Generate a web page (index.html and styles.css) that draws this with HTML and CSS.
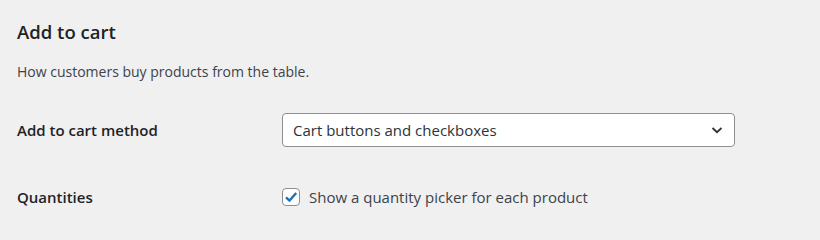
FILE: index.html
```html
<!DOCTYPE html>
<html lang="en">
<head>
	<meta charset="UTF-8">
	<meta name="viewport" content="width=device-width, initial-scale=1.0">
	<title>Add to cart</title>
	<link rel="stylesheet" href="styles.css">
</head>
<body>
<div class="settings">
	<h2 class="settings-title">Add to cart</h2>
	<p class="settings-desc">How customers buy products from the table.</p>
	<div class="form-table">
		<div class="form-row row-method">
			<label class="form-label" for="cart-method">Add to cart method</label>
			<div class="form-field">
				<div class="select">
					<span class="select-value">Cart buttons and checkboxes</span>
					<svg class="select-arrow" width="14" height="14" viewBox="0 0 14 14"><path d="M2.5 5 L7 9.2 L11.5 5" fill="none" stroke="#2c3338" stroke-width="1.8"/></svg>
				</div>
			</div>
		</div>
		<div class="form-row row-qty">
			<span class="form-label">Quantities</span>
			<div class="form-field">
				<label class="check">
					<span class="check-box">
						<svg width="14" height="14" viewBox="0 0 14 14"><path d="M2 7.4 L5.5 10.6 L12.2 3" fill="none" stroke="#2271b1" stroke-width="2.4"/></svg>
					</span>
					Show a quantity picker for each product
				</label>
			</div>
		</div>
	</div>
</div>
</body>
</html>
```

FILE: styles.css
```css
body {
	margin: 0;
	background: #f0f0f1;
	color: #1d2327;
	font-family: "Open Sans", "Noto Sans", sans-serif;
	font-size: 14px;
}
.settings {
	padding: 20px 17px;
}
.settings-title {
	margin: 0;
	font-size: 18.5px;
	font-weight: 600;
	line-height: 24px;
}
.settings-desc {
	margin: 18px 0 0;
	line-height: 20px;
	color: #3c434a;
}
.form-table {
	margin-top: 31px;
	font-size: 15px;
}
.form-row {
	display: grid;
	grid-template-columns: 265px 453px;
	align-items: center;
}
.row-qty {
	margin-top: 40px;
}
.form-label {
	font-weight: 600;
}
.select {
	height: 34px;
	box-sizing: border-box;
	border: 1px solid #8c8f94;
	border-radius: 4px;
	background: #fff;
	display: flex;
	align-items: center;
	justify-content: space-between;
	padding: 0 10px 0 10px;
	color: #2c3338;
}
.check {
	display: flex;
	align-items: center;
	gap: 9px;
	color: #3c434a;
}
.check-box {
	width: 18px;
	height: 18px;
	box-sizing: border-box;
	border: 1px solid #8c8f94;
	border-radius: 4px;
	background: #fff;
	display: flex;
	align-items: center;
	justify-content: center;
}
```
